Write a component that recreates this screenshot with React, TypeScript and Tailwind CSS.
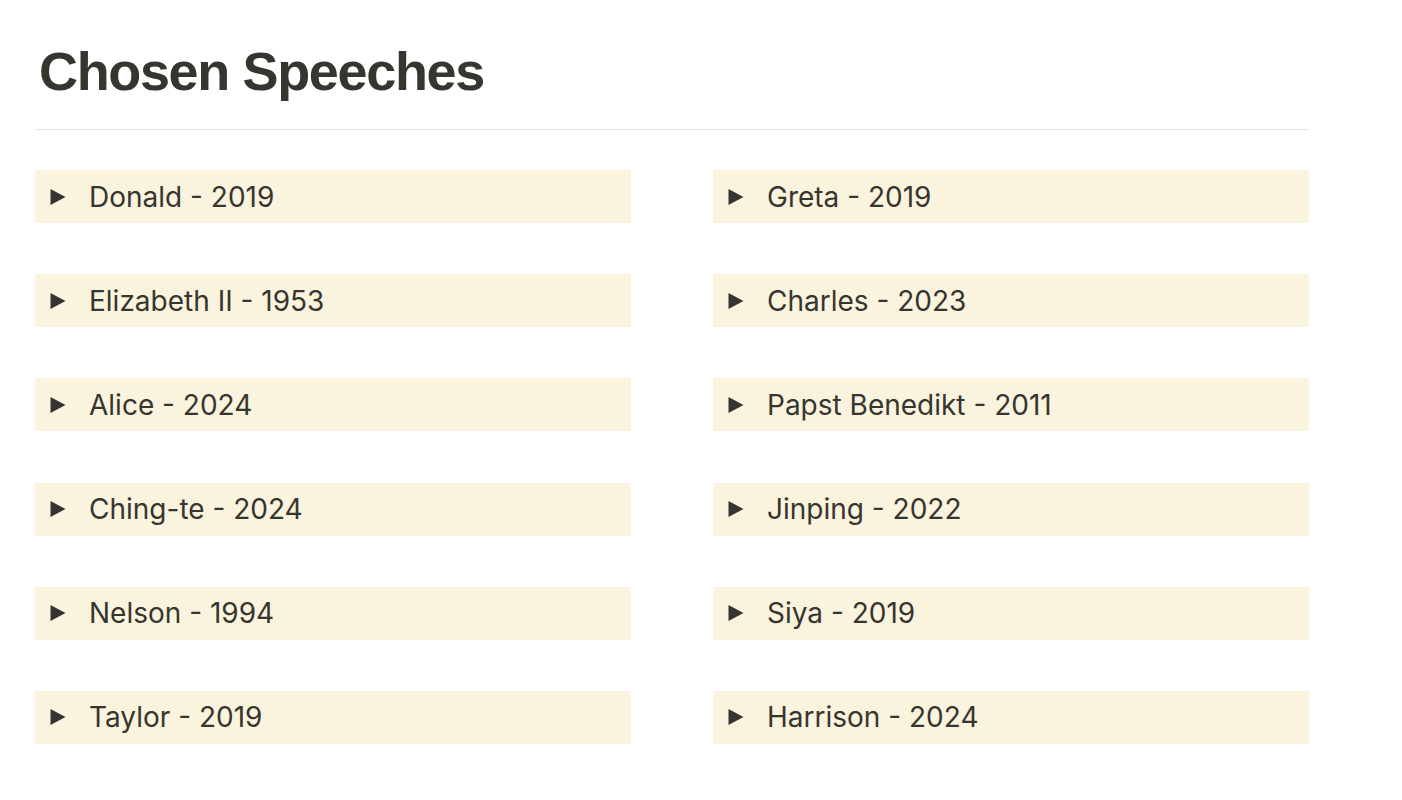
const left = [
  "Donald - 2019",
  "Elizabeth II - 1953",
  "Alice - 2024",
  "Ching-te - 2024",
  "Nelson - 1994",
  "Taylor - 2019",
];

const right = [
  "Greta - 2019",
  "Charles - 2023",
  "Papst Benedikt - 2011",
  "Jinping - 2022",
  "Siya - 2019",
  "Harrison - 2024",
];

function Toggle({ label }: { label: string }) {
  return (
    <div className="flex h-[53px] items-center bg-[#faf3dd] pl-[15px]">
      <svg width="16" height="18" viewBox="0 0 16 18" className="shrink-0 text-[#37352f]">
        <path d="M0.5 1 L15.5 9 L0.5 17 Z" fill="currentColor" />
      </svg>
      <span className="ml-[23px] text-[28px] leading-none text-[#37352f]">{label}</span>
    </div>
  );
}

export default function App() {
  return (
    <div
      className="min-h-[800px] bg-white px-[35px] pt-[39px]"
      style={{ fontFamily: "Inter, 'Noto Sans', sans-serif" }}
    >
      <div className="w-[1274px]">
        <h1
          className="pl-[4px] text-[54px] font-bold leading-[64px] tracking-[-0.025em] text-[#37352f]"
          style={{ fontFamily: "'Liberation Sans', Arial, sans-serif" }}
        >
          Chosen Speeches
        </h1>
        <div className="mt-[26px] h-px bg-[#e3e2e0]" />
        <div className="mt-[40px] grid grid-cols-2 gap-x-[82px]">
          {[left, right].map((col, c) => (
            <div key={c} className="flex flex-col gap-[51.2px]">
              {col.map((t) => (
                <Toggle key={t} label={t} />
              ))}
            </div>
          ))}
        </div>
      </div>
    </div>
  );
}
